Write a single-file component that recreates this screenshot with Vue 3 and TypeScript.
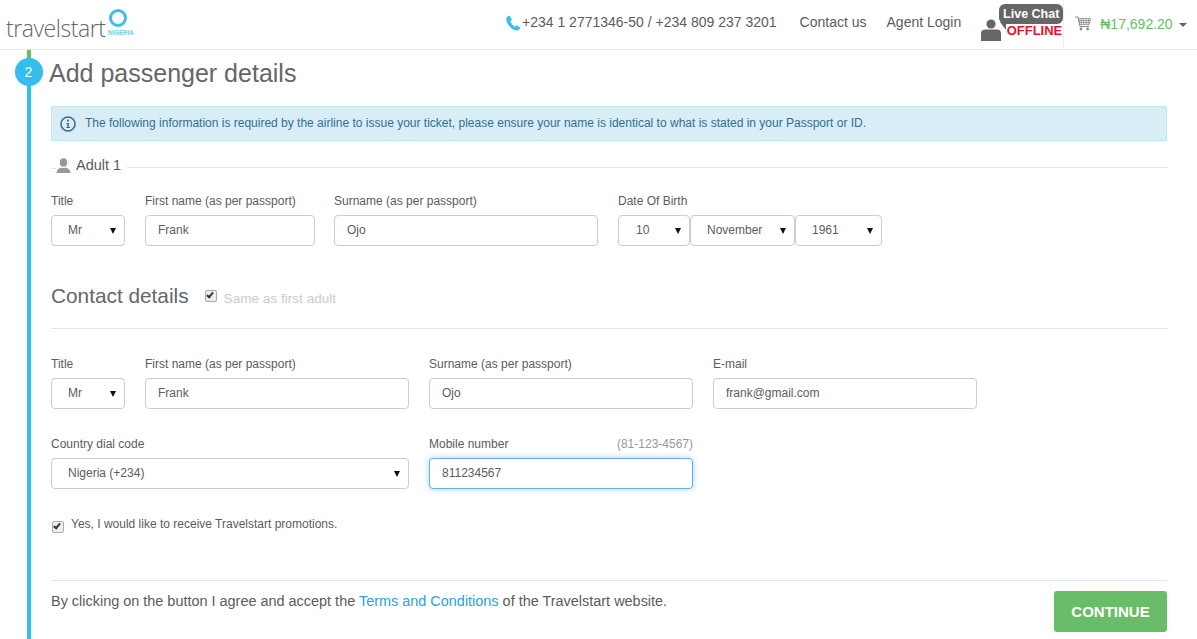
<script setup lang="ts">
const adultRow = [
  { label: 'First name (as per passport)', value: 'Frank', cls: 'w170' },
  { label: 'Surname (as per passport)', value: 'Ojo', cls: 'w264' },
]
const contactRow = [
  { label: 'First name (as per passport)', value: 'Frank', cls: 'w264' },
  { label: 'Surname (as per passport)', value: 'Ojo', cls: 'w264' },
  { label: 'E-mail', value: 'frank@gmail.com', cls: 'w264' },
]
const dob = [
  { value: '10', cls: 'd1' },
  { value: 'November', cls: 'd2' },
  { value: '1961', cls: 'd3' },
]
</script>

<template>
  <div class="page">
    <header class="top">
      <div class="logo">
        <span class="logo-word">travelstart</span>
        <span class="logo-ring"></span>
        <span class="logo-country">NIGERIA</span>
      </div>
      <div class="phone">
        <svg class="phone-icon" viewBox="0 0 16 16" width="16" height="16">
          <path d="M3.6 .8 C2.2 1.6 1 2.8 1.2 4.6 C1.6 7.6 3.4 10.4 5.6 12.4 C7.6 14.2 10 15.6 12.2 15.4 C13.4 15.2 14.6 14.4 15.2 13.2 C15.3 12.8 15.2 12.5 14.9 12.3 L12.2 10.4 C11.8 10.1 11.4 10.2 11.1 10.5 L9.9 11.8 C8.2 10.9 6.2 8.8 5.2 6.6 L6.5 5.4 C6.8 5.1 6.9 4.7 6.7 4.3 L4.8 1.1 C4.5 .7 4 .6 3.6 .8 Z" fill="#3cbfec"/>
        </svg>
        <span>+234 1 2771346-50 / +234 809 237 3201</span>
      </div>
      <a class="nav-link contact">Contact us</a>
      <a class="nav-link agent">Agent Login</a>
      <div class="chat">
        <svg class="chat-person" viewBox="0 0 20 22" width="20" height="22">
          <circle cx="10" cy="5" r="4.6" fill="#666"/>
          <path d="M0 22 V14 C0 11.4 2 10.4 4.5 10.4 H15.5 C18 10.4 20 11.4 20 14 V22 Z" fill="#666"/>
        </svg>
        <div class="chat-text">
          <span class="bubble">Live Chat</span>
          <span class="offline">OFFLINE</span>
        </div>
      </div>
      <div class="cart">
        <svg class="cart-icon" viewBox="0 0 16 15" width="16" height="15">
          <path d="M0 1 H3 L5 10.5 H14" fill="none" stroke="#8a8a8a" stroke-width="1"/>
          <path d="M3.6 2.5 H15.5 L14.2 8.6 H4.8 Z M6 2.5 L6.5 8.6 M8.6 2.5 V8.6 M11.2 2.5 L10.9 8.6 M13.6 2.5 L13 8.6 M4 4.5 H15 M4.4 6.5 H14.7" fill="none" stroke="#8a8a8a" stroke-width=".8"/>
          <circle cx="6" cy="13" r="1.4" fill="#8a8a8a"/>
          <circle cx="12.6" cy="13" r="1.4" fill="#8a8a8a"/>
        </svg>
        <span class="price">₦17,692.20</span>
        <span class="caret"></span>
      </div>
    </header>

    <div class="body">
      <div class="rail">
        <span class="rail-done"></span>
        <span class="rail-now"></span>
        <span class="step-dot">2</span>
      </div>

      <main class="content">
        <h1 class="title">Add passenger details</h1>

        <div class="alert">
          <svg class="info" viewBox="0 0 16 16" width="16" height="16">
            <circle cx="8" cy="8" r="7" fill="none" stroke="#31708f" stroke-width="1.6"/>
            <circle cx="8" cy="4.6" r="1.1" fill="#31708f"/>
            <path d="M6.4 7 H8.9 V11 H10 V12 H6.3 V11 H7.4 V8 H6.4 Z" fill="#31708f"/>
          </svg>
          <span>The following information is required by the airline to issue your ticket, please ensure your name is identical to what is stated in your Passport or ID.</span>
        </div>

        <div class="legend">
          <svg class="adult-icon" viewBox="0 0 15 15" width="15" height="15">
            <ellipse cx="7.5" cy="4.4" rx="3.7" ry="4.2" fill="#999"/>
            <path d="M0.5 15 C0.5 11.5 3 10.4 5.4 9.4 C6.6 10.2 8.4 10.2 9.6 9.4 C12 10.4 14.5 11.5 14.5 15 Z" fill="#999"/>
          </svg>
          <span class="legend-text">Adult 1</span>
          <span class="legend-line"></span>
        </div>

        <div class="row adult-row">
          <div class="field">
            <label>Title</label>
            <div class="select w74"><span>Mr</span><i class="arrow"></i></div>
          </div>
          <div v-for="f in adultRow" :key="f.label" class="field">
            <label>{{ f.label }}</label>
            <input class="input" :class="f.cls" :value="f.value" />
          </div>
          <div class="field">
            <label>Date Of Birth</label>
            <div class="dob">
              <div v-for="d in dob" :key="d.value" class="select" :class="d.cls"><span>{{ d.value }}</span><i class="arrow"></i></div>
            </div>
          </div>
        </div>

        <div class="contact-head">
          <h2>Contact details</h2>
          <input class="check" type="checkbox" checked />
          <span class="same">Same as first adult</span>
        </div>

        <div class="row contact-row">
          <div class="field">
            <label>Title</label>
            <div class="select w74"><span>Mr</span><i class="arrow"></i></div>
          </div>
          <div v-for="f in contactRow" :key="f.label" class="field">
            <label>{{ f.label }}</label>
            <input class="input" :class="f.cls" :value="f.value" />
          </div>
        </div>

        <div class="row phone-row">
          <div class="field">
            <label>Country dial code</label>
            <div class="select w358"><span>Nigeria (+234)</span><i class="arrow"></i></div>
          </div>
          <div class="field">
            <label class="label-split"><span>Mobile number</span><span class="hint">(81-123-4567)</span></label>
            <input class="input w264 focus" value="811234567" />
          </div>
        </div>

        <div class="promo">
          <input class="check" type="checkbox" checked />
          <span>Yes, I would like to receive Travelstart promotions.</span>
        </div>

        <footer class="foot">
          <p>By clicking on the button I agree and accept the <a>Terms and Conditions</a> of the Travelstart website.</p>
          <button class="continue" type="button">CONTINUE</button>
        </footer>
      </main>
    </div>
  </div>
</template>

<style>
html, body { margin: 0; background: #fff; overflow: hidden; }
</style>

<style scoped>
.page {
  width: 1197px;
  height: 639px;
  overflow: hidden;
  font-family: "Liberation Sans", Arial, sans-serif;
  color: #5c5c5c;
  display: flex;
  flex-direction: column;
}
.top {
  height: 49px;
  flex: none;
  border-bottom: 1px solid #e7e7e7;
  display: flex;
  align-items: flex-start;
  font-size: 14px;
}
.logo { position: relative; width: 506px; height: 49px; flex: none; }
.logo-word {
  position: absolute;
  left: 6px;
  top: 12px;
  font-family: "Open Sans", sans-serif;
  font-weight: 300;
  font-size: 23px;
  line-height: 32px;
  letter-spacing: -0.45px;
  color: #666;
}
.logo-ring {
  position: absolute;
  left: 109px;
  top: 9px;
  width: 12px;
  height: 12px;
  border: 3.5px solid #3cbfec;
  border-radius: 50%;
}
.logo-country {
  position: absolute;
  left: 108px;
  top: 28px;
  font-size: 7.5px;
  line-height: 9px;
  font-weight: 700;
  color: #6fcdee;
  transform: scaleX(.82);
  transform-origin: left;
}
.phone { display: flex; align-items: center; height: 16px; margin-top: 14px; flex: none; }
.phone-icon { flex: none; margin-top: 2px; margin-left: -1px; margin-right: 1px; }
.nav-link { margin-top: 14px; line-height: 16px; color: #5c5c5c; flex: none; }
.contact { margin-left: 23px; }
.agent { margin-left: 20px; }
.chat { position: relative; width: 82px; margin-left: 20px; height: 47px; flex: none; display: flex; border-right: 1px solid #eee; box-sizing: content-box; }
.chat-person { margin-top: 19px; flex: none; }
.chat-text { display: flex; flex-direction: column; align-items: flex-end; margin-left: -2px; padding-top: 4px; }
.bubble {
  position: relative;
  width: 64px;
  height: 20px;
  background: #666;
  border-radius: 6px;
  color: #fff;
  font-size: 12.5px;
  font-weight: 700;
  line-height: 20px;
  text-align: center;
}
.bubble::after {
  content: "";
  position: absolute;
  left: 1px;
  bottom: -6px;
  border-top: 8px solid #666;
  border-left: 6px solid transparent;
}
.offline { color: #e8112d; font-size: 13px; font-weight: 700; line-height: 16px; margin-top: -1px; margin-right: 1px; }
.cart { display: flex; align-items: flex-start; margin-left: 11px; flex: none; }
.cart-icon { margin-top: 16px; flex: none; }
.price { color: #68bc68; margin-left: 9px; margin-top: 16px; line-height: 16px; }
.caret {
  margin-left: 6px;
  margin-top: 23px;
  border-top: 4px solid #666;
  border-left: 4px solid transparent;
  border-right: 4px solid transparent;
}
.body { flex: 1; display: flex; min-height: 0; }
.rail { position: relative; width: 4px; margin-left: 27px; flex: none; display: flex; flex-direction: column; }
.rail-done { height: 10px; background: #68bc68; flex: none; }
.rail-now { flex: 1; background: #35bdee; }
.step-dot {
  position: absolute;
  left: -12px;
  top: 8px;
  width: 28px;
  height: 28px;
  border-radius: 50%;
  background: #35bdee;
  color: #fff;
  font-size: 14px;
  line-height: 28px;
  text-align: center;
  text-indent: -1px;
}
.content { margin-left: 20px; width: 1116px; flex: none; }
.title { margin: 8px 0 0 -2px; font-size: 25px; font-weight: 400; line-height: 30px; color: #666; }
.alert {
  margin-top: 18px;
  height: 35px;
  box-sizing: border-box;
  border: 1px solid #bce8f1;
  border-radius: 2px;
  background: #d9edf7;
  color: #31708f;
  font-size: 12px;
  display: flex;
  align-items: center;
  padding: 0 0 2px 8px;
}
.info { flex: none; margin-right: 9px; margin-top: 2px; }
.legend { display: flex; align-items: center; height: 18px; margin-top: 15px; position: relative; }
.legend-line { flex: 1; height: 1px; background: #e5e5e5; margin-left: 6px; margin-top: 4px; }
.adult-icon { flex: none; margin-left: 5px; }
.legend-text { margin-left: 5px; font-size: 14.5px; }
.legend::before { content: ""; position: absolute; left: 0; top: 12px; width: 5px; height: 1px; background: #e5e5e5; }
.row { display: flex; }
.adult-row { margin-top: 20px; gap: 20px; }
.field { display: flex; flex-direction: column; }
.field label { font-size: 12px; line-height: 14px; margin-bottom: 7px; display: block; color: #5c5c5c; }
.select, .input {
  box-sizing: border-box;
  height: 31px;
  border: 1px solid #ccc;
  border-radius: 4px;
  background: #fff;
  font-family: inherit;
  font-size: 12px;
  color: #5c5c5c;
}
.select { display: flex; align-items: center; justify-content: space-between; padding: 0 8px 2px 16px; }
.input { padding: 0 12px 2px; outline: none; }
.arrow { border-top: 6px solid #111; border-left: 3px solid transparent; border-right: 3px solid transparent; margin-top: 2px; }
.w74 { width: 74px; }
.w170 { width: 170px; }
.w264 { width: 264px; }
.w358 { width: 358px; }
.dob { display: flex; }
.d1 { width: 72px; padding-left: 17px; }
.d2 { width: 105px; }
.d3 { width: 87px; }
.adult-row .field:nth-child(2) { margin-right: -1px; }
.contact-head { display: flex; align-items: center; height: 30px; margin-top: 36px; padding-bottom: 16px; border-bottom: 1px solid #e5e5e5; }
.contact-head h2 { margin: -2px 0 0; font-size: 20.8px; font-weight: 400; line-height: 30px; color: #666; }
.check {
  appearance: none;
  position: relative;
  box-sizing: border-box;
  margin: 0;
  width: 12px;
  height: 12px;
  flex: none;
  border: 1px solid #aaa;
  border-radius: 2px;
  background: #eee;
}
.check::after {
  content: "";
  position: absolute;
  left: 2px;
  top: 0;
  width: 4px;
  height: 7px;
  border: solid #333;
  border-width: 0 2px 2px 0;
  box-sizing: border-box;
  transform: rotate(40deg);
}
.contact-head .check { margin-left: 16px; margin-top: -3px; }
.same { margin-left: 7px; font-size: 13.6px; color: #ccc; margin-top: 2px; }
.contact-row { margin-top: 28px; gap: 20px; }
.phone-row { margin-top: 28px; gap: 20px; }
.label-split { display: flex !important; justify-content: space-between; }
.hint { color: #999; }
.focus { border-color: #66afe9; box-shadow: 0 0 6px rgba(102, 175, 233, .6); }
.promo { display: flex; align-items: flex-start; margin-top: 28px; font-size: 12px; line-height: 14px; }
.promo .check { margin: 4px 7px 0 1px; }
.foot {
  margin-top: 47px;
  border-top: 1px solid #e5e5e5;
  display: flex;
  justify-content: space-between;
  align-items: flex-start;
  font-size: 14.45px;
}
.foot p { margin: 12px 0 0; line-height: 16px; }
.foot a { color: #2aa4d5; }
.continue {
  margin-top: 10px;
  width: 113px;
  height: 41px;
  border: 0;
  border-radius: 3px;
  background: #6abd68;
  color: #fff;
  font-family: inherit;
  font-size: 15px;
  font-weight: 700;
}
</style>
